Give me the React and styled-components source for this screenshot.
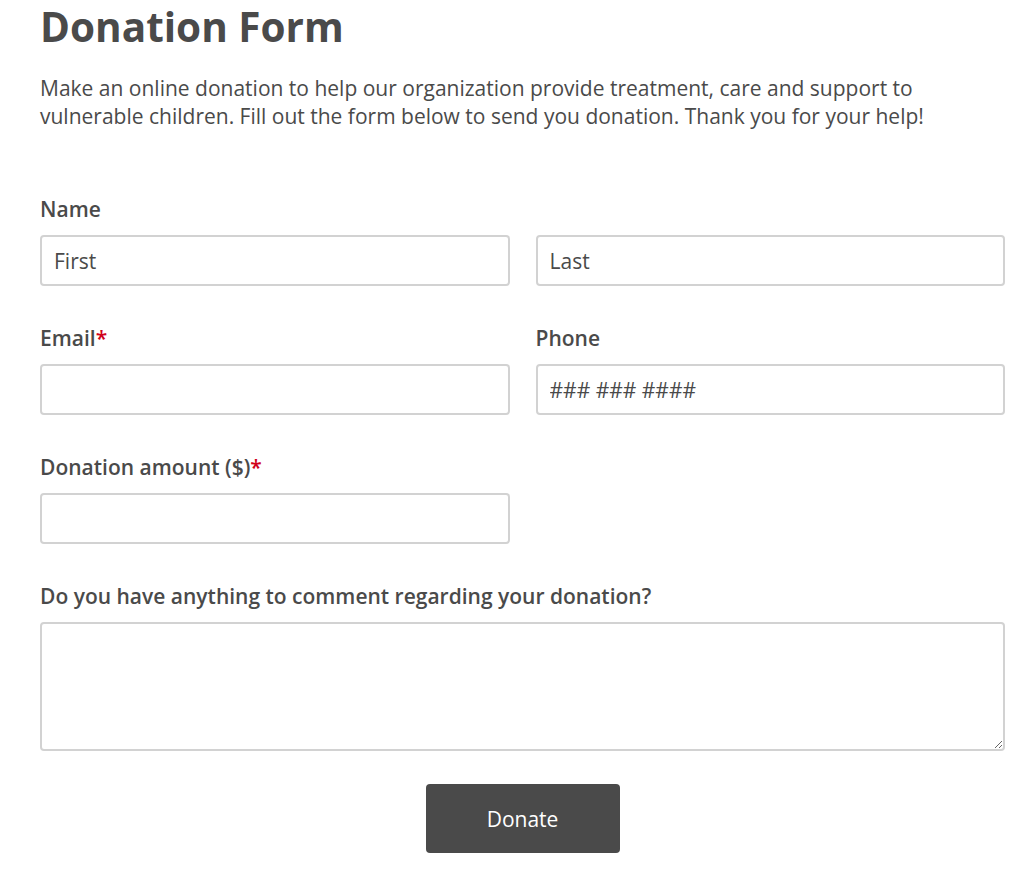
import React from "react";
import styled, { createGlobalStyle } from "styled-components";

const GlobalStyle = createGlobalStyle`
  body {
    margin: 0;
    background: #fff;
    font-family: "Open Sans", "Liberation Sans", sans-serif;
    color: #4a4a4a;
  }
  * { box-sizing: border-box; }
`;

const Page = styled.div`
  padding: 0 29px 40px 40px;
`;

const Title = styled.h1`
  margin: 0;
  font-size: 40.5px;
  line-height: 54px;
  font-weight: 700;
  color: #4a4a4a;
`;

const Intro = styled.p`
  margin: 20px 0 0;
  font-size: 21px;
  line-height: 28px;
  color: #4a4a4a;
`;

const Form = styled.form`
  margin-top: 65px;
  display: grid;
  grid-template-columns: 1fr 1fr;
  column-gap: 26px;
  row-gap: 38px;
`;

const Field = styled.div`
  display: flex;
  flex-direction: column;
  gap: 12px;
  grid-column: ${(p) => (p.$wide ? "1 / -1" : "auto")};
`;

const Label = styled.label`
  font-size: 21px;
  line-height: 28px;
  font-weight: 600;
  color: #4a4a4a;
`;

const Star = styled.span`
  color: #d0021b;
`;

const Pair = styled.div`
  display: grid;
  grid-template-columns: 1fr 1fr;
  column-gap: 26px;
`;

const Input = styled.input`
  width: 100%;
  height: 51px;
  border: 2px solid #d2d2d2;
  border-radius: 4px;
  padding: 0 12px;
  font-family: inherit;
  font-size: 21px;
  color: #4a4a4a;
  outline: none;
  &::placeholder {
    color: #4a4a4a;
    opacity: 1;
  }
`;

const TextArea = styled.textarea`
  width: 100%;
  height: 129px;
  border: 2px solid #d2d2d2;
  border-radius: 4px;
  padding: 10px 12px;
  font-family: inherit;
  font-size: 21px;
  resize: vertical;
  outline: none;
`;

const Actions = styled.div`
  grid-column: 1 / -1;
  display: flex;
  justify-content: center;
  margin-top: -5px;
`;

const Button = styled.button`
  width: 194px;
  height: 69px;
  border: none;
  border-radius: 4px;
  background: #4a4a4a;
  color: #fff;
  font-family: inherit;
  font-size: 21px;
  cursor: pointer;
`;

export default function App() {
  return (
    <Page>
      <GlobalStyle />
      <Title>Donation Form</Title>
      <Intro>
        Make an online donation to help our organization provide treatment, care and support to
        vulnerable children. Fill out the form below to send you donation. Thank you for your help!
      </Intro>
      <Form onSubmit={(e) => e.preventDefault()}>
        <Field $wide>
          <Label>Name</Label>
          <Pair>
            <Input placeholder="First" />
            <Input placeholder="Last" />
          </Pair>
        </Field>
        <Field>
          <Label>
            Email<Star>*</Star>
          </Label>
          <Input type="email" />
        </Field>
        <Field>
          <Label>Phone</Label>
          <Input placeholder="### ### ####" />
        </Field>
        <Field>
          <Label>
            Donation amount ($)<Star>*</Star>
          </Label>
          <Input />
        </Field>
        <div />
        <Field $wide>
          <Label>Do you have anything to comment regarding your donation?</Label>
          <TextArea />
        </Field>
        <Actions>
          <Button type="submit">Donate</Button>
        </Actions>
      </Form>
    </Page>
  );
}
